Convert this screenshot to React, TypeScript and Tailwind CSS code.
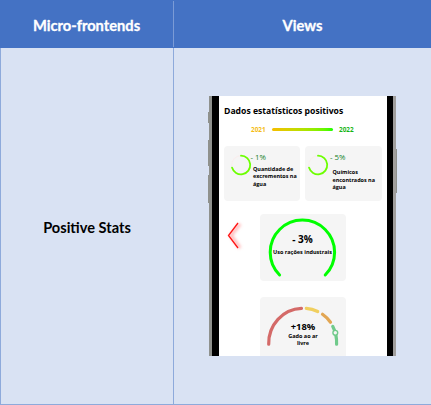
import React from "react";

const sans = "font-['Open_Sans','Noto_Sans',sans-serif]";

function Ring() {
  return (
    <svg className="block h-[22px] w-[22px] shrink-0" viewBox="-11 -11 22 22" fill="none">
      <circle r="9.3" stroke="#f8eeee" strokeWidth="1.2" />
      <path d="M0 -9.3A9.3 9.3 0 1 1 -9 2.6" stroke="#6cff00" strokeWidth="1.8" strokeLinecap="round" />
    </svg>
  );
}

function SmallCard({ value, lines, inset, shift, textGap }: { value: string; lines: string[]; inset: string; shift: string; textGap: string }) {
  return (
    <div className={`flex h-[55px] w-[76.5px] rounded-[4px] bg-[#f5f5f5] pt-2 ${inset}`}>
      <Ring />
      <div className={`whitespace-nowrap ${shift}`}>
        <div className="-mt-px text-[7.8px] leading-[8px] text-[#16832b]">{value}</div>
        <div className={`pl-[2.5px] text-[5.45px] font-bold leading-[7.5px] text-black ${textGap}`}>
          {lines.map((line) => (
            <div key={line}>{line}</div>
          ))}
        </div>
      </div>
    </div>
  );
}

function Phone() {
  return (
    <div className={`relative flex h-[260px] w-[187px] border-l-[3px] border-r-[3px] border-l-[#8f918d] border-r-[#a09e9c] bg-black pl-[7px] pr-[6px] ${sans}`}>
      <i className="absolute -left-1 top-4 h-[11px] w-px bg-[#8f918d]" />
      <i className="absolute -left-1 top-[44px] h-[26px] w-px bg-[#8f918d]" />
      <i className="absolute -left-1 top-[79px] h-[28px] w-px bg-[#8f918d]" />
      <i className="absolute -right-1 top-[53px] h-[44px] w-px bg-[#8f918d]" />
      <div className="flex h-full w-[168px] flex-col overflow-hidden bg-white">
        <h1 className="mt-[9px] h-[12px] whitespace-nowrap pl-[5px] text-[8.65px] font-bold leading-[12px] text-black">
          Dados estatísticos positivos
        </h1>
        <div className="mt-[8px] flex h-[9px] items-center pl-8 text-[6.4px] font-bold leading-[9px]">
          <span className="w-[21px] text-[#f5bd18]">2021</span>
          <span className="h-[3px] w-[61px] rounded-full bg-gradient-to-r from-[#f5bd00] to-[#00ff00]" />
          <span className="pl-[6px] text-[#16b516]">2022</span>
        </div>
        <div className="mt-3 flex gap-[5px] pl-[4.5px]">
          <SmallCard value="- 1%" lines={["Quantidade de", "excrementos na", "água"]} inset="pl-[6px]" shift="-ml-px" textGap="pt-[4.5px]" />
          <SmallCard value="- 5%" lines={["Químicos", "encontrados na", "água"]} inset="pl-[2px]" shift="ml-px" textGap="pt-[8px]" />
        </div>
        <div className="mt-[13px] flex h-[67px]">
          <div className="w-[41px] pl-[6px] pt-[5px]">
            <svg className="block h-[34px] w-5 overflow-visible" viewBox="0 0 20 34" fill="none">
              <defs>
                <filter id="glow" x="-50%" y="-50%" width="250%" height="200%">
                  <feGaussianBlur stdDeviation="1.6" />
                </filter>
              </defs>
              <path d="M15 5L6 16.5L15 29" stroke="#ff8080" strokeOpacity=".55" strokeWidth="3.2" filter="url(#glow)" />
              <path d="M13 4L3.5 16.5L13 29" stroke="#ff1414" strokeWidth="1.3" />
            </svg>
          </div>
          <div className="grid h-[67px] w-[86px] rounded-[4px] bg-[#f5f5f5]">
            <svg className="col-start-1 row-start-1 block h-[67px] w-[86px]" viewBox="260 214 86 67" fill="none">
              <path d="M279.6 275A32.2 32.2 0 1 1 325.2 275" stroke="#00ff00" strokeWidth="3" strokeLinecap="round" />
            </svg>
            <div className="col-start-1 row-start-1 whitespace-nowrap pr-px pt-[19px] text-center font-bold text-black">
              <div className="text-[10px] leading-[12px]">- 3%</div>
              <div className="mt-[3px] text-[5.5px] leading-[8px]">Uso rações industrais</div>
            </div>
          </div>
        </div>
        <div className="ml-[41px] mt-[16px] grid h-[67px] w-[86px] shrink-0 rounded-[4px] bg-[#f5f5f5]">
          <svg className="col-start-1 row-start-1 block h-[67px] w-[86px]" viewBox="260 297 86 67" fill="none" strokeWidth="3.2" strokeLinecap="round">
            <path d="M268.7 344.2A34 35 0 0 1 301.5 308.3" stroke="#d46a68" />
            <path d="M306.3 308.4A34 35 0 0 1 317.7 311.5" stroke="#f0cf5f" />
            <path d="M322.5 314.3A34 35 0 0 1 330.5 322.2" stroke="#e2a653" />
            <path d="M332.7 326.3A34 35 0 0 1 336.6 344.2" stroke="#70ca8b" />
            <circle cx="335.3" cy="332.8" r="2.4" fill="#f5f5f5" stroke="#70ca8b" strokeWidth="1.4" />
          </svg>
          <div className="col-start-1 row-start-1 pt-[24px] text-center font-bold text-black">
            <div className="text-[9.4px] leading-[12px]">+18%</div>
            <div className="text-[5.5px] leading-[7.4px]">Gado ao ar<br />livre</div>
          </div>
        </div>
      </div>
    </div>
  );
}

export default function App() {
  return (
    <div className="flex h-[405px] w-[431px] flex-col overflow-hidden bg-[#d9e2f3] font-[Lato,sans-serif]">
      <div className="flex h-12 shrink-0 bg-[#4472c4] text-[14.7px] font-bold text-white [-webkit-text-stroke:0.3px_white]">
        <div className="my-px flex w-[174px] items-center justify-center border-r border-[#7b9bd6] pt-[3px]">Micro-frontends</div>
        <div className="flex flex-1 items-center justify-center pt-[3px]">Views</div>
      </div>
      <div className="flex flex-1 border-b border-l border-[#8eaadb]">
        <div className="flex w-[173px] items-center justify-center border-r border-[#8eaadb] pt-[3px] text-[14.6px] font-bold text-black">Positive Stats</div>
        <div className="flex-1 pl-[35px] pt-12">
          <Phone />
        </div>
      </div>
    </div>
  );
}
